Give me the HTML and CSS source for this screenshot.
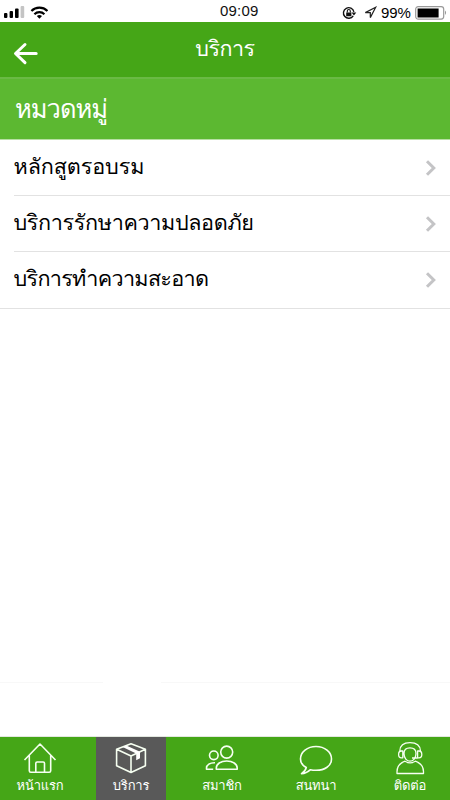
FILE: index.html
```html
<!DOCTYPE html>
<html lang="th">
<head>
<meta charset="utf-8">
<title>บริการ</title>
<link rel="stylesheet" href="styles.css">
</head>
<body>
<div class="app">
  <div class="status">
    <svg class="signals" width="48" height="22" viewBox="0 0 48 22">
      <rect x="4" y="13" width="3.4" height="5" rx="1"/>
      <rect x="9.6" y="11" width="3.4" height="7" rx="1"/>
      <rect x="15" y="8.5" width="3.6" height="9.5" rx="1"/>
      <rect x="20.6" y="6" width="3.6" height="12" rx="1" fill="#c4c4c4"/>
      <g fill="none" stroke="#000" stroke-width="2.2"><path d="M31.4 11C35.8 6.6 43 6.6 47.4 11"/><path d="M34.4 14.2C37.2 11.5 41.6 11.5 44.4 14.2"/></g>
      <path d="M36.8 16.1Q39.4 14 42 16.1L39.4 18.7Z"/>
    </svg>
    <span class="clock">09:09</span>
    <div class="status-right">
      <svg width="15" height="14" viewBox="0 0 15 14" fill="none" stroke="#111">
        <path stroke-width="1.4" d="M11.2 9.8A5.3 5.3 0 1 1 11.9 5.8"/><path fill="#111" stroke="none" d="M9.6 6.5h4.7l-2.4 3zM4.2 6.4h5.2v3.9H4.2z"/><path stroke-width="1.1" d="M5.3 6.4V5q0-1.5 1.5-1.5T8.3 5v1.4"/>
      </svg>
      <svg class="arrow" width="13" height="13" viewBox="0 0 13 13" fill="none" stroke="#222" stroke-width="1.2"><path d="M11.7 1.3L1.3 6.6h5v5z"/></svg>
      <span class="percent">99%</span>
      <svg width="35" height="14" viewBox="0 0 35 14">
        <rect x=".7" y=".7" width="28" height="12.4" rx="2.5" fill="#fff" stroke="#999" stroke-width="1.2"/><rect x="2.6" y="2.5" width="21" height="9"/><path fill="#999" d="M30 4.5q2.2 2.2 0 4.4z"/>
      </svg>
    </div>
  </div>
  <header class="header">
    <svg class="back" width="25" height="24" viewBox="0 0 25 24" fill="none" stroke="#fff" stroke-width="3" stroke-linecap="round" stroke-linejoin="round"><path d="M12 2.5L2.5 11.5l9.5 9.2M3 11.5h20.2"/></svg>
    <h1 class="title">บริการ</h1>
  </header>
  <h2 class="category">หมวดหมู่</h2>
  <ul class="list">
    <li class="row"><span class="label label-training">หลักสูตรอบรม</span><svg class="chevron" width="12" height="18" viewBox="0 0 12 18"><path d="M2 2.2L8.8 9 2 15.8"/></svg></li>
    <li class="row"><span class="label label-security">บริการรักษาความปลอดภัย</span><svg class="chevron" width="12" height="18" viewBox="0 0 12 18"><path d="M2 2.2L8.8 9 2 15.8"/></svg></li>
    <li class="row"><span class="label label-cleaning">บริการทำความสะอาด</span><svg class="chevron" width="12" height="18" viewBox="0 0 12 18"><path d="M2 2.2L8.8 9 2 15.8"/></svg></li>
  </ul>
  <div class="space"></div>
  <div class="footer-line"></div>
  <nav class="tabs">
    <a class="tab tab-home"><svg class="icon" width="36" height="36" viewBox="0 0 36 36"><path d="M2.5 20L18 4 33.5 20M7.3 15.5V30.7q0 1.5 1.5 1.5H27.2q1.5 0 1.5-1.5V15.5M13.8 32V23.3q0-1.3 1.3-1.3h6.1q1.3 0 1.3 1.3V32"/></svg><span>หน้าแรก</span></a>
    <a class="tab tab-service"><svg class="icon" width="36" height="36" viewBox="0 0 36 36"><path d="M3.6 9.3L18 3.8l14.4 5.5v16.4L18 32.5 3.6 25.7ZM3.6 9.3L18 16l14.4-6.7M18 16v16.5"/><path class="tape" d="M9.6 6.9l3.7-1.5L27 11.8v6.4l-3.8 2v-6.7Z"/></svg><span>บริการ</span></a>
    <a class="tab tab-member"><svg class="icon" width="36" height="36" viewBox="0 0 36 36"><circle cx="22.7" cy="12.1" r="6"/><circle cx="9.8" cy="15.3" r="4.3"/><path d="M12.3 29.3V28c0-4 4.5-7 10.4-7s10.5 3 10.5 7v1.3ZM11 22.7C6 22.5 2.5 24.9 2.5 28v1.3h6.7"/></svg><span>สมาชิก</span></a>
    <a class="tab tab-chat"><svg class="icon" width="36" height="36" viewBox="0 0 36 36"><path d="M8.3 27.5C4.5 25.4 2.5 22.8 2.5 19 2.5 12 9.3 6.5 18 6.5S33.5 12 33.5 19 26.7 30.3 18 30.3c-2.2 0-3.7-.1-5.5-.6-2.6 2.4-5.8 3.9-9 4 2.5-1.6 4.1-3.5 4.8-6.2Z"/></svg><span>สนทนา</span></a>
    <a class="tab tab-contact"><svg class="icon thin" width="36" height="36" viewBox="0 0 36 36"><path d="M7.8 11C8 5.5 12 2.7 18 2.7S28.2 5.5 28.5 11M12 13.5C12 9.5 14 7.8 18 7.8s6 1.8 6 5.7c0 4.5-2.8 7.7-6 7.7s-6-3.2-6-7.7ZM10.8 11H9.4a2.8 3.4 0 0 0 0 6.8h1.4ZM25.6 11H27a2.8 3.4 0 0 1 0 6.8h-1.4ZM25.7 18H20M5 33.5v-1.8c0-5.5 3-8.7 8-10.5Q18 24.6 23.3 21.2C28.5 23 31.5 26.2 31.5 31.7v1.8Z"/></svg><span>ติดต่อ</span></a>
  </nav>
</div>
</body>
</html>
```
FILE: styles.css
```css
* { box-sizing: border-box; }
body { margin: 0; background: #fff; font-family: "Liberation Sans", Loma, sans-serif; color: #000; }
.app { width: 450px; height: 800px; display: flex; flex-direction: column; overflow: hidden; }
.status { height: 22px; flex: none; display: grid; grid-template-columns: 48px 1fr 108px; align-items: center; }
.signals { display: block; }
.clock { padding-left: 172px; font-size: 15px; line-height: 22px; color: #111; letter-spacing: .2px; }
.status-right { display: flex; align-items: center; padding-top: 3px; white-space: nowrap; }
.status-right svg { flex: none; }
.arrow { margin-left: 7px; }
.percent { width: 34px; margin-left: 4px; font-size: 15px; line-height: 18px; letter-spacing: -.1px; }
.header { height: 57px; flex: none; display: grid; grid-template-columns: 50px 350px 50px; background: #45a617; border-bottom: 2px solid #6aba44; color: #fff; }
.back { margin: 20px 0 0 13px; }
.title { margin: 0; text-align: center; font-size: 21.5px; font-weight: 400; line-height: 54px; letter-spacing: -.5px; }
.category { margin: 0; height: 61px; flex: none; padding-left: 15px; background: #5cb831; border-bottom: 1px solid #b8dfa4; color: #fff; font-size: 25.5px; font-weight: 400; line-height: 60px; letter-spacing: -1px; }
.list { margin: 0; padding: 0 0 0 14px; height: 169px; flex: none; list-style: none; border-bottom: 1px solid #e2e2e2; }
.row { height: 56px; display: flex; align-items: center; justify-content: space-between; padding-right: 13px; border-bottom: 1px solid #e2e2e2; }
.row:last-child { border-bottom: 0; }
.label { height: 54px; line-height: 52px; font-size: 21.6px; margin-left: -.5px; }
.label-training { letter-spacing: -.1px; }
.label-security { letter-spacing: -.36px; }
.label-cleaning { letter-spacing: -.7px; }
.chevron { fill: none; stroke: #c4c4c6; stroke-width: 3; }
.space { flex: 1; }
.footer-line { height: 55px; border-bottom: 1px solid #e3e8e0; background: linear-gradient(90deg, #f8f8f8 103px, #fff 103px, #fff 161px, #f8f8f8 161px) top / 100% 1px no-repeat; }
.tabs { height: 63px; flex: none; display: grid; grid-template-columns: 96px 70px 112px 76px 96px; background: #45a617; color: #fff; }
.tab { display: flex; flex-direction: column; align-items: center; padding-top: 3px; font-size: 13px; line-height: 18px; letter-spacing: -.2px; white-space: nowrap; }
.tab-home { padding-right: 16px; }
.tab-service { background: #595959; }
.tab-contact { padding-left: 16px; }
.icon { flex: none; fill: none; stroke: #f6fff1; stroke-width: 1.6; stroke-linejoin: round; }
.tab span { margin-top: 1px; }
.tape { fill: #fff; stroke: none; }
.thin { stroke-width: 1.3; }
```
